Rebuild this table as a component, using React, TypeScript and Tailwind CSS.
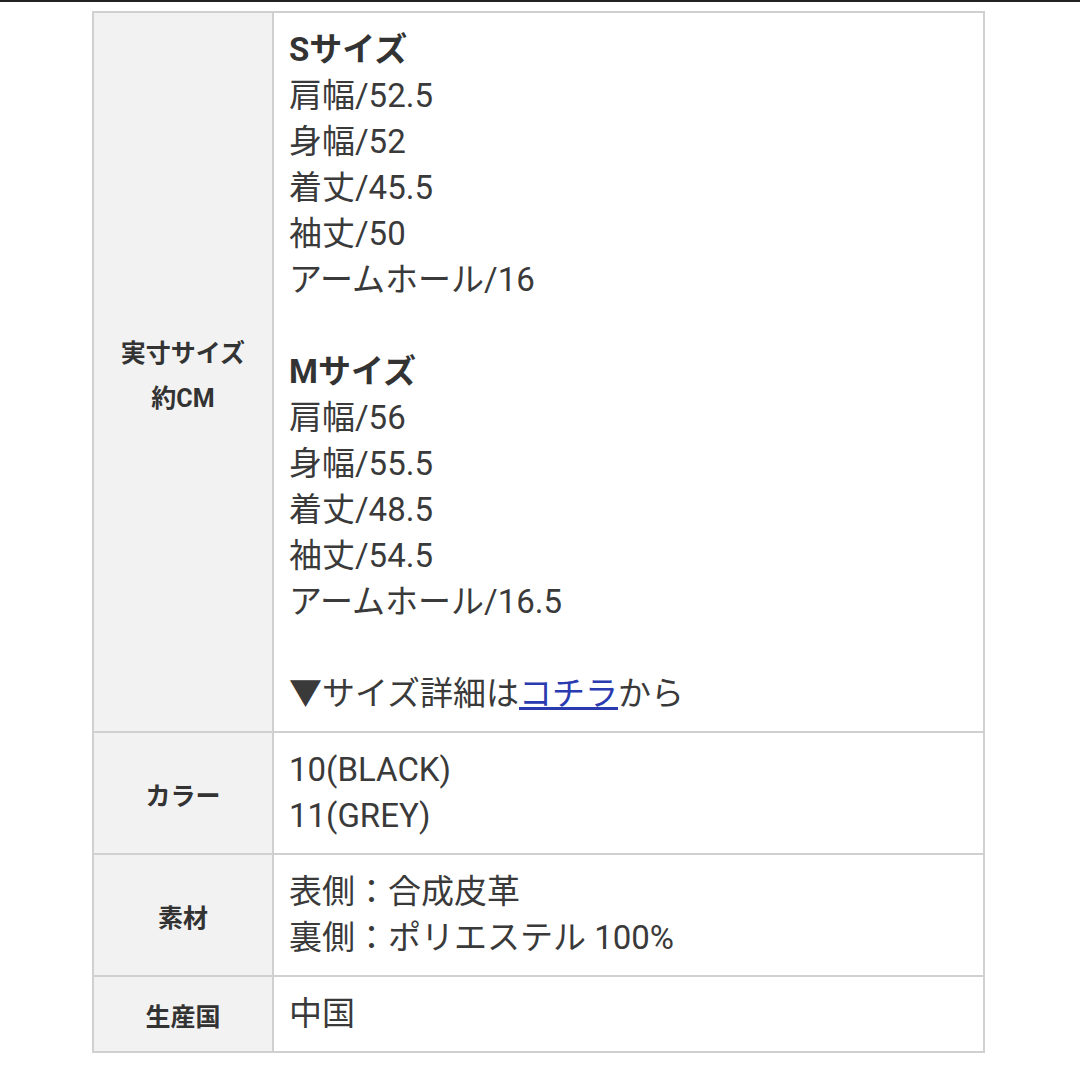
import React from 'react';

const font = { fontFamily: 'Roboto, "Noto Sans CJK JP", sans-serif' };

const sizeS = ['肩幅/52.5', '身幅/52', '着丈/45.5', '袖丈/50', 'アームホール/16'];
const sizeM = ['肩幅/56', '身幅/55.5', '着丈/48.5', '袖丈/54.5', 'アームホール/16.5'];

const Row: React.FC<{ label: React.ReactNode; first?: boolean; children: React.ReactNode }> = ({ label, first, children }) => (
  <div className={`flex ${first ? '' : 'border-t-2 border-[#d0d0d0]'}`}>
    <div className="w-[180px] shrink-0 bg-[#f2f2f2] border-r-2 border-[#d0d0d0] flex items-center justify-center text-center font-bold text-[25px] leading-[45px] text-[#333]">
      <div className="pt-[7px]">{label}</div>
    </div>
    <div className="flex-1 px-[15px] py-[14px] text-[33px] leading-[46px] text-[#3a3a3a]">{children}</div>
  </div>
);

export default function App() {
  return (
    <div className="w-[1080px] h-[1080px] bg-white overflow-hidden" style={font}>
      <div className="h-[2px] bg-[#222]" />
      <div className="pt-[9px] pl-[92px]">
        <div className="w-[893px] border-2 border-[#d0d0d0]">
          <Row first label={<>実寸サイズ<br />約CM</>}>
            <div className="font-bold text-[#333]">Sサイズ</div>
            {sizeS.map((t) => (
              <div key={t}>{t}</div>
            ))}
            <div className="h-[46px]" />
            <div className="font-bold text-[#333]">Mサイズ</div>
            {sizeM.map((t) => (
              <div key={t}>{t}</div>
            ))}
            <div className="h-[46px]" />
            <div>
              ▼サイズ詳細は<a href="#" className="text-[#2a3bb0] underline">コチラ</a>から
            </div>
          </Row>
          <Row label="カラー">
            <div>10(BLACK)</div>
            <div>11(GREY)</div>
          </Row>
          <Row label="素材">
            <div>表側：合成皮革</div>
            <div>裏側：ポリエステル 100%</div>
          </Row>
          <Row label="生産国">
            <div>中国</div>
          </Row>
        </div>
      </div>
    </div>
  );
}
